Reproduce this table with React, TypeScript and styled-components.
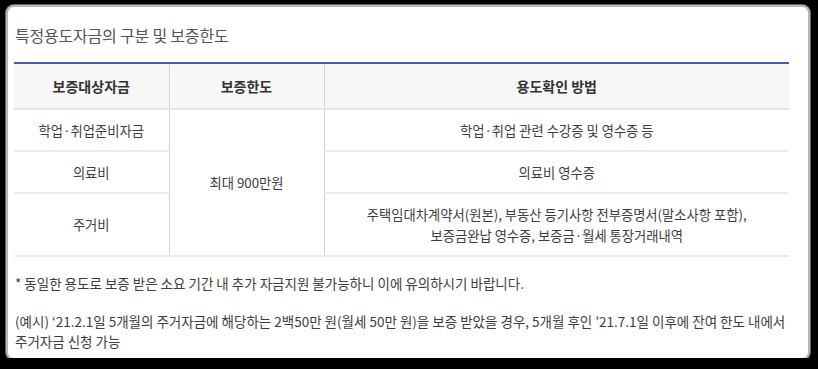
import React from "react";
import styled, { createGlobalStyle } from "styled-components";

const Global = createGlobalStyle`
  html, body { margin: 0; padding: 0; background: #000; }
  body { font-family: "Noto Sans CJK KR", "Noto Sans", sans-serif; }
`;

const Panel = styled.div`
  box-sizing: border-box;
  margin: 7px 0 0 8px;
  width: 800px;
  height: 351px;
  background: #fff;
  border-radius: 6px;
  box-shadow: 0 0 0 2px #b9b9b9, 0 0 0 3px #6a6a6a;
  padding: 18px 0 0 6px;
`;

const Title = styled.h3`
  margin: 0 0 17px 1px;
  font-size: 16px;
  line-height: 20px;
  font-weight: 400;
  color: #555;
  letter-spacing: -0.2px;
`;

const Table = styled.table`
  width: 775px;
  border-collapse: collapse;
  table-layout: fixed;
  border-top: 2px solid #3f5ea8;
`;

const Th = styled.th`
  height: 44px;
  padding: 0;
  background: #f7f7f7;
  border-bottom: 2px solid #e6e6e6;
  border-left: 1px solid #d3d3d3;
  font-size: 14px;
  font-weight: 700;
  color: #333;
  &:first-child { border-left: none; }
`;

const Td = styled.td<{ $h?: number; $first?: boolean }>`
  height: ${(p) => p.$h ?? 40}px;
  padding: 0;
  text-align: center;
  vertical-align: middle;
  border-bottom: 2px solid #ebebeb;
  border-left: ${(p) => (p.$first ? "none" : "1px solid #d3d3d3")};
  font-size: 13.3px;
  line-height: 21px;
  color: #3d3d3d;
`;

const Notes = styled.div`
  margin-top: 16px;
  padding-left: 1px;
  width: 785px;
  font-size: 13.5px;
  line-height: 20px;
  color: #3d3d3d;
  word-break: keep-all;
`;

const Note = styled.p<{ $gap?: number }>`
  margin: ${(p) => p.$gap ?? 0}px 0 0;
`;

export default function App() {
  return (
    <>
      <Global />
      <Panel>
        <Title>특정용도자금의 구분 및 보증한도</Title>
        <Table>
          <colgroup>
            <col style={{ width: 155 }} />
            <col style={{ width: 155 }} />
            <col />
          </colgroup>
          <thead>
            <tr>
              <Th>보증대상자금</Th>
              <Th>보증한도</Th>
              <Th>용도확인 방법</Th>
            </tr>
          </thead>
          <tbody>
            <tr>
              <Td $first>학업·취업준비자금</Td>
              <Td rowSpan={3}>최대 900만원</Td>
              <Td>학업·취업 관련 수강증 및 영수증 등</Td>
            </tr>
            <tr>
              <Td $first>의료비</Td>
              <Td>의료비 영수증</Td>
            </tr>
            <tr>
              <Td $first $h={61}>주거비</Td>
              <Td $h={61}>
                주택임대차계약서(원본), 부동산 등기사항 전부증명서(말소사항 포함),
                <br />
                보증금완납 영수증, 보증금·월세 통장거래내역
              </Td>
            </tr>
          </tbody>
        </Table>
        <Notes>
          <Note>* 동일한 용도로 보증 받은 소요 기간 내 추가 자금지원 불가능하니 이에 유의하시기 바랍니다.</Note>
          <Note $gap={18}>
            (예시) ‘21.2.1일 5개월의 주거자금에 해당하는 2백50만 원(월세 50만 원)을 보증 받았을 경우, 5개월 후인 ’21.7.1일 이후에 잔여 한도 내에서 주거자금 신청 가능
          </Note>
        </Notes>
      </Panel>
    </>
  );
}
